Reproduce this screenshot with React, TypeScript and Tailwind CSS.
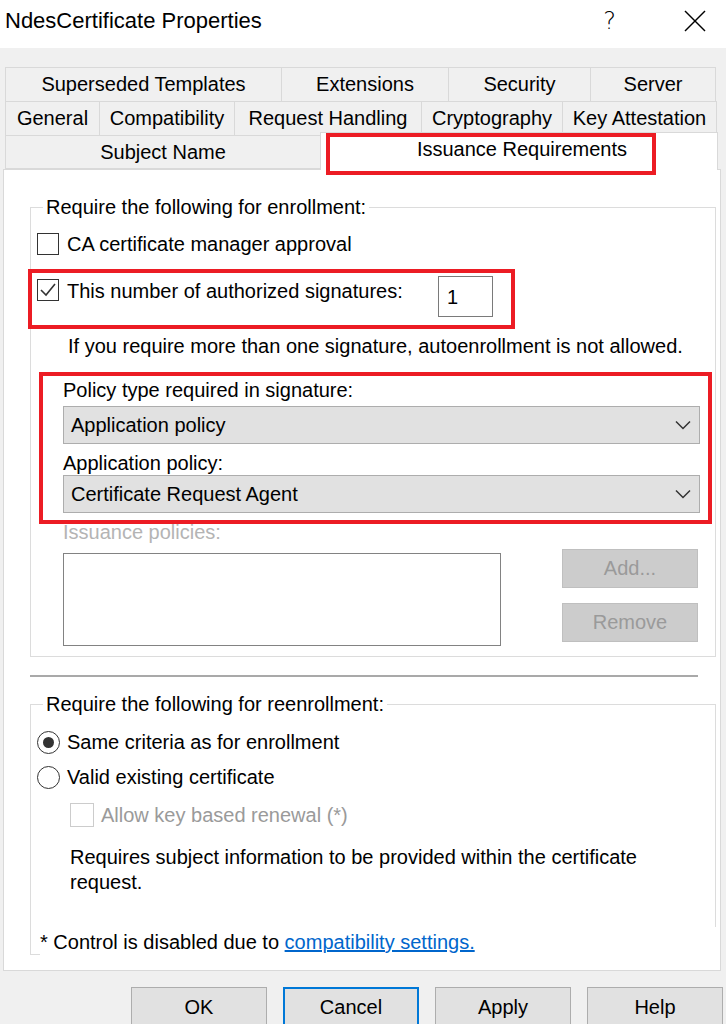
import React from "react";

type Tab = { label: string; cls: string };

const row1: Tab[] = [
  { label: "Superseded Templates", cls: "w-[277px]" },
  { label: "Extensions", cls: "w-[168px]" },
  { label: "Security", cls: "w-[143px]" },
  { label: "Server", cls: "w-[126px]" },
];
const row2: Tab[] = [
  { label: "General", cls: "w-[95px]" },
  { label: "Compatibility", cls: "w-[136px]" },
  { label: "Request Handling", cls: "w-[188px]" },
  { label: "Cryptography", cls: "w-[142px]" },
  { label: "Key Attestation", cls: "w-[155px]" },
];

function TabBtn({ t }: { t: Tab }) {
  return (
    <div
      className={`${t.cls} h-full -ml-px first:ml-0 border border-[#d9d9d9] bg-[#f0f0f0] flex items-center justify-center whitespace-nowrap`}
    >
      {t.label}
    </div>
  );
}

function CheckBox({ checked, disabled }: { checked?: boolean; disabled?: boolean }) {
  return (
    <span
      className={
        disabled
          ? "w-[24px] h-[24px] shrink-0 border border-[#cccccc] bg-white flex items-center justify-center"
          : "w-[22px] h-[22px] shrink-0 border border-[#333333] bg-white flex items-center justify-center"
      }
    >
      {checked && (
        <svg width="18" height="16" viewBox="0 0 18 16">
          <polyline points="2,8 7,13 16,2" fill="none" stroke="#333333" strokeWidth="1.6" />
        </svg>
      )}
    </span>
  );
}

function Radio({ checked }: { checked?: boolean }) {
  return (
    <span className="w-[23px] h-[23px] shrink-0 rounded-full border border-[#333333] bg-white flex items-center justify-center">
      {checked && <span className="w-[11px] h-[11px] rounded-full bg-[#333333]" />}
    </span>
  );
}

function Combo({ value }: { value: string }) {
  return (
    <div className="ml-[26px] w-[637px] h-[38px] bg-[#e1e1e1] border border-[#adadad] flex items-center pl-[7px] pr-[8px]">
      <span>{value}</span>
      <svg className="ml-auto" width="16" height="10" viewBox="0 0 16 10">
        <polyline points="1,1.5 8,8.5 15,1.5" fill="none" stroke="#333333" strokeWidth="1.5" />
      </svg>
    </div>
  );
}

export default function App() {
  return (
    <div className="relative w-[726px] h-[1024px] overflow-hidden bg-[#f0f0f0] font-['Liberation_Sans',Arial,sans-serif] text-[20px] leading-[23px] text-black">
      {/* Title bar */}
      <div className="h-[48px] bg-white flex items-center pl-[5px] pr-[20px] pb-[7px]">
        <span className="text-[22px] leading-[26px]">NdesCertificate Properties</span>
        <span className="ml-auto text-[24px] leading-[26px] font-['DejaVu_Sans',sans-serif] font-light">?</span>
        <svg className="ml-[68px]" width="22" height="22" viewBox="0 0 22 22">
          <line x1="1" y1="1" x2="21" y2="21" stroke="#000" strokeWidth="1.5" />
          <line x1="21" y1="1" x2="1" y2="21" stroke="#000" strokeWidth="1.5" />
        </svg>
      </div>

      {/* Tabs */}
      <div className="mt-[19px] ml-[5px] w-[714px] relative z-10">
        <div className="flex h-[35px]">
          {row1.map((t) => (
            <TabBtn key={t.label} t={t} />
          ))}
        </div>
        <div className="flex h-[35px] -mt-px">
          {row2.map((t) => (
            <TabBtn key={t.label} t={t} />
          ))}
        </div>
        <div className="flex h-[34px] -mt-px items-end">
          <div className="w-[316px] h-full border border-[#d9d9d9] bg-[#f0f0f0] flex items-center justify-center">
            Subject Name
          </div>
          <div className="w-[398px] h-[38px] -ml-px translate-y-px bg-white border-l border-t border-r border-[#d9d9d9] flex justify-center pt-[5px] pl-[6px]">
            Issuance Requirements
          </div>
        </div>
      </div>

      {/* Panel */}
      <div className="ml-[3px] w-[718px] h-[802px] bg-white border border-[#d9d9d9] pl-[26px] flex flex-col overflow-hidden">
        {/* Group 1 */}
        <fieldset className="mt-[26px] w-[686px] border border-[#dcdcdc] pl-[6px] pb-[10px]">
          <legend className="ml-[6px] px-[3px]">Require the following for enrollment:</legend>
          <div className="mt-[14px] h-[22px] flex items-center gap-[8px]">
            <CheckBox />
            <span>CA certificate manager approval</span>
          </div>
          <div className="mt-[21px] flex items-start">
            <span className="mt-[3px]">
              <CheckBox checked />
            </span>
            <span className="ml-[8px] mt-[4px] w-[371px]">This number of authorized signatures:</span>
            <div className="w-[55px] h-[41px] border border-[#7a7a7a] bg-white pl-[8px] pt-[9px]">1</div>
          </div>
          <div className="mt-[18px] ml-[31px]">
            If you require more than one signature, autoenrollment is not allowed.
          </div>
          <div className="mt-[21px] ml-[26px]">Policy type required in signature:</div>
          <div className="mt-[4px]">
            <Combo value="Application policy" />
          </div>
          <div className="mt-[8px] ml-[26px]">Application policy:</div>
          <div className="mt-0">
            <Combo value="Certificate Request Agent" />
          </div>
          <div className="mt-[8px] ml-[26px] text-[#b4b4b4]">Issuance policies:</div>
          <div className="mt-[5px] flex items-start">
            <div className="ml-[26px] mt-[4px] w-[438px] h-[93px] border border-[#828282] bg-white" />
            <div className="ml-[61px] flex flex-col gap-[15px]">
              <div className="w-[136px] h-[39px] bg-[#cccccc] border border-[#bfbfbf] text-[#9a9a9a] flex items-center justify-center">
                Add...
              </div>
              <div className="w-[136px] h-[39px] bg-[#cccccc] border border-[#bfbfbf] text-[#9a9a9a] flex items-center justify-center">
                Remove
              </div>
            </div>
          </div>
        </fieldset>

        {/* Separator */}
        <div className="mt-[18px] w-[668px] h-[2px] bg-[#a9a9a9]" />

        {/* Group 2 */}
        <fieldset className="mt-[16px] w-[686px] h-[262px] border border-[#dcdcdc] pl-[6px]">
          <legend className="ml-[6px] px-[3px]">Require the following for reenrollment:</legend>
          <div className="mt-[15px] h-[23px] flex items-center gap-[7px]">
            <Radio checked />
            <span>Same criteria as for enrollment</span>
          </div>
          <div className="mt-[12px] h-[23px] flex items-center gap-[7px]">
            <Radio />
            <span>Valid existing certificate</span>
          </div>
          <div className="mt-[14px] ml-[33px] h-[24px] flex items-center gap-[7px]">
            <CheckBox disabled />
            <span className="text-[#9a9a9a]">Allow key based renewal (*)</span>
          </div>
          <div className="mt-[18px] ml-[33px] w-[610px] leading-[25px]">
            Requires subject information to be provided within the certificate request.
          </div>
        </fieldset>
        <div className="relative z-10 -mt-[28px] ml-[10px] h-[31px] w-[690px] bg-white flex items-center">
          <span>
            * Control is disabled due to{" "}
            <span className="text-[#0066cc] underline">compatibility settings.</span>
          </span>
        </div>
      </div>

      {/* Buttons */}
      <div className="mt-[16px] ml-[131px] flex gap-[16px]">
        <div className="w-[136px] h-[40px] bg-[#e1e1e1] border border-[#adadad] flex items-center justify-center">OK</div>
        <div className="w-[136px] h-[40px] bg-[#e1e1e1] border-2 border-[#0078d7] flex items-center justify-center">Cancel</div>
        <div className="w-[136px] h-[40px] bg-[#e1e1e1] border border-[#adadad] flex items-center justify-center">Apply</div>
        <div className="w-[136px] h-[40px] bg-[#e1e1e1] border border-[#adadad] flex items-center justify-center">Help</div>
      </div>

      {/* Red annotation boxes */}
      <div className="absolute left-[326px] top-[133px] w-[330px] h-[42px] border-[4px] border-[#ec1c24] z-20 pointer-events-none" />
      <div className="absolute left-[28px] top-[269px] w-[487px] h-[60px] border-[4px] border-[#ec1c24] z-20 pointer-events-none" />
      <div className="absolute left-[39px] top-[372px] w-[673px] h-[152px] border-[4px] border-[#ec1c24] z-20 pointer-events-none" />
    </div>
  );
}
